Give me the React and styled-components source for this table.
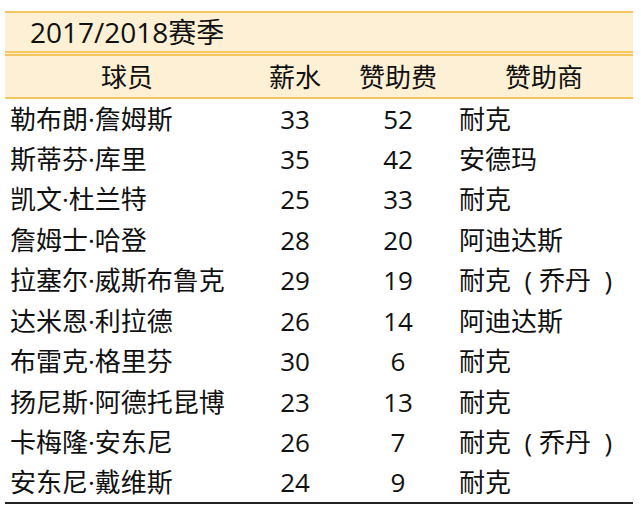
import React from "react";
import styled, { createGlobalStyle } from "styled-components";

const GlobalStyle = createGlobalStyle`
  body {
    margin: 0;
    background: #ffffff;
    font-family: "Open Sans", "Noto Sans CJK SC", sans-serif;
    color: #111;
  }
`;

const LINE = "#f5c65e";
const FILL = "#fef0d4";

const Page = styled.div`
  padding: 11px 8px 0 5px;
`;

const Table = styled.table`
  width: 628px;
  border-collapse: collapse;
  table-layout: fixed;
  font-size: 26px;
  line-height: 1;
`;

const TitleCell = styled.th`
  background: ${FILL};
  border-top: 2px solid ${LINE};
  border-bottom: 5px double ${LINE};
  height: 38px;
  padding: 0 0 0 25px;
  text-align: left;
  font-weight: 400;
  font-size: 28px;
`;

const HeadCell = styled.th`
  background: ${FILL};
  border-bottom: 2px solid ${LINE};
  height: 41px;
  padding: 0;
  text-align: center;
  font-weight: 400;
`;

const Row = styled.tr`
  height: 40.5px;
  &:last-child td {
    border-bottom: 2px solid #222;
  }
`;

const Cell = styled.td`
  padding: 0 0 0 ${(p) => p.$pad || 0}px;
  text-align: ${(p) => p.$align || "left"};
  white-space: pre;
`;

const JORDAN = "耐克\u00a0\u00a0( 乔丹\u00a0 )";

const players = [
  ["勒布朗·詹姆斯", 33, 52, "耐克"],
  ["斯蒂芬·库里", 35, 42, "安德玛"],
  ["凯文·杜兰特", 25, 33, "耐克"],
  ["詹姆士·哈登", 28, 20, "阿迪达斯"],
  ["拉塞尔·威斯布鲁克", 29, 19, JORDAN],
  ["达米恩·利拉德", 26, 14, "阿迪达斯"],
  ["布雷克·格里芬", 30, 6, "耐克"],
  ["扬尼斯·阿德托昆博", 23, 13, "耐克"],
  ["卡梅隆·安东尼", 26, 7, JORDAN],
  ["安东尼·戴维斯", 24, 9, "耐克"],
];

export default function App() {
  return (
    <Page>
      <GlobalStyle />
      <Table>
        <colgroup>
          <col style={{ width: 244 }} />
          <col style={{ width: 92 }} />
          <col style={{ width: 114 }} />
          <col style={{ width: 178 }} />
        </colgroup>
        <thead>
          <tr>
            <TitleCell colSpan={4}>2017/2018赛季</TitleCell>
          </tr>
          <tr>
            <HeadCell>球员</HeadCell>
            <HeadCell>薪水</HeadCell>
            <HeadCell>赞助费</HeadCell>
            <HeadCell>赞助商</HeadCell>
          </tr>
        </thead>
        <tbody>
          {players.map(([name, salary, fee, brand]) => (
            <Row key={name}>
              <Cell $pad={5}>{name}</Cell>
              <Cell $align="center">{salary}</Cell>
              <Cell $align="center">{fee}</Cell>
              <Cell $pad={4}>{brand}</Cell>
            </Row>
          ))}
        </tbody>
      </Table>
    </Page>
  );
}
